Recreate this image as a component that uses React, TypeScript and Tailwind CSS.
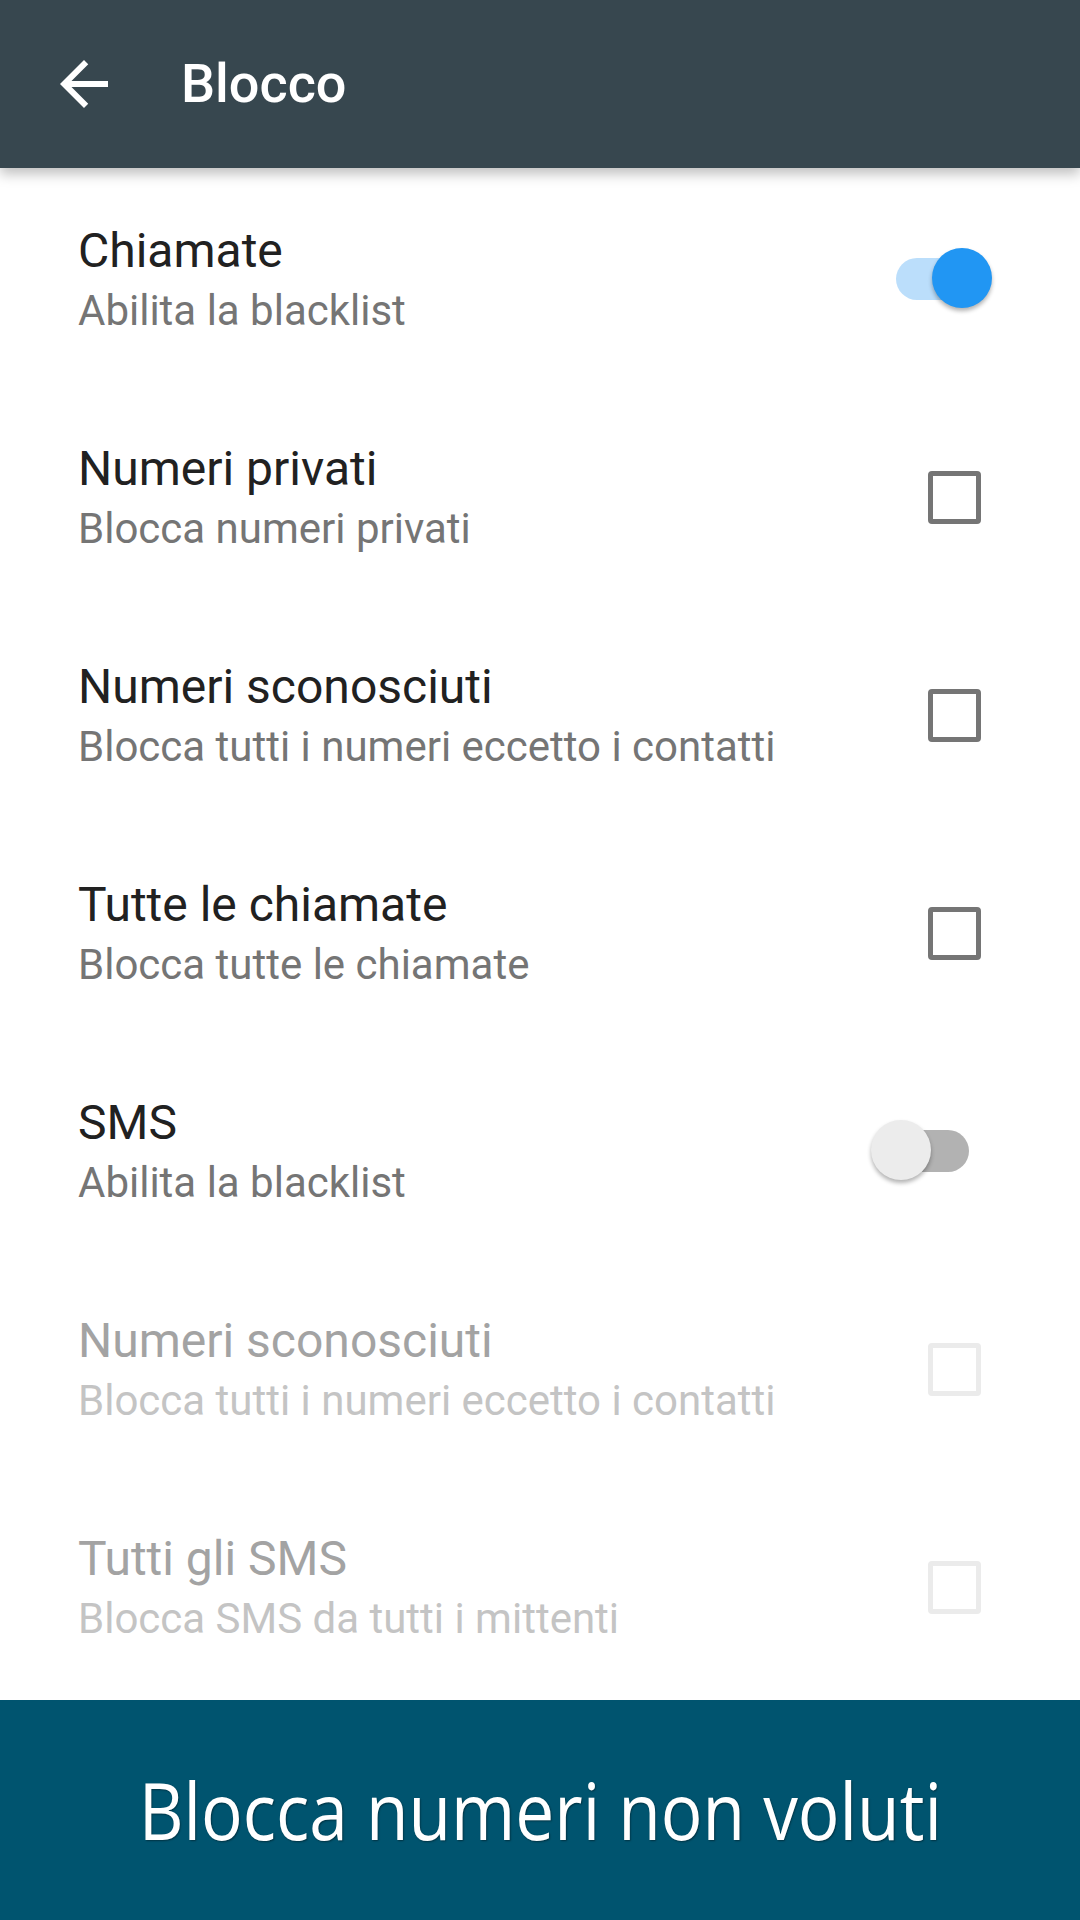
import { useState } from 'react';

type Control = 'switch' | 'checkbox';

type Pref = {
  id: string;
  title: string;
  summary: string;
  control: Control;
  checked: boolean;
  disabled?: boolean;
};

const initialPrefs: Pref[] = [
  { id: 'calls', title: 'Chiamate', summary: 'Abilita la blacklist', control: 'switch', checked: true },
  { id: 'private', title: 'Numeri privati', summary: 'Blocca numeri privati', control: 'checkbox', checked: false },
  { id: 'unknown', title: 'Numeri sconosciuti', summary: 'Blocca tutti i numeri eccetto i contatti', control: 'checkbox', checked: false },
  { id: 'all-calls', title: 'Tutte le chiamate', summary: 'Blocca tutte le chiamate', control: 'checkbox', checked: false },
  { id: 'sms', title: 'SMS', summary: 'Abilita la blacklist', control: 'switch', checked: false },
  { id: 'sms-unknown', title: 'Numeri sconosciuti', summary: 'Blocca tutti i numeri eccetto i contatti', control: 'checkbox', checked: false, disabled: true },
  { id: 'sms-all', title: 'Tutti gli SMS', summary: 'Blocca SMS da tutti i mittenti', control: 'checkbox', checked: false, disabled: true },
];

function Switch({ on }: { on: boolean }) {
  return (
    <div className="relative w-[121px] h-[62px] mr-[88px]">
      <div className={`absolute left-[25px] top-[10px] w-[73px] h-[42px] rounded-full ${on ? 'bg-[#BBDEFB]' : 'bg-[#B2B2B2]'}`} />
      <div
        className={`absolute top-0 w-[60px] h-[60px] rounded-full shadow-[0_3px_4px_rgba(0,0,0,0.3)] ${
          on ? 'left-[61px] bg-[#2196F3]' : 'left-0 bg-[#ECECEC]'
        }`}
      />
    </div>
  );
}

function Checkbox({ checked, disabled }: { checked: boolean; disabled?: boolean }) {
  return (
    <div
      className={`w-[53px] h-[53px] mr-[99px] rounded-[4px] border-[5px] ${
        disabled ? 'border-[#EBEBEB]' : 'border-[#757575]'
      } ${checked ? 'bg-[#757575]' : ''}`}
    />
  );
}

export default function App() {
  const [prefs, setPrefs] = useState(initialPrefs);

  const toggle = (id: string) =>
    setPrefs(prev => prev.map(p => (p.id === id && !p.disabled ? { ...p, checked: !p.checked } : p)));

  return (
    <div className="h-[1920px] w-[1080px] flex flex-col bg-white font-['Roboto',sans-serif] overflow-hidden">
      {/* Toolbar */}
      <div className="relative z-10 h-[168px] shrink-0 bg-[#37474F] flex items-center shadow-[0_6px_12px_rgba(0,0,0,0.25)]">
        <svg viewBox="0 0 24 24" className="ml-[48px] w-[72px] h-[72px]" fill="#ffffff">
          <path d="M20 11H7.83l5.59-5.59L12 4l-8 8 8 8 1.41-1.41L7.83 13H20v-2z" />
        </svg>
        <span className="ml-[61px] text-[54px] leading-none font-medium text-white">Blocco</span>
      </div>

      {/* Preferences */}
      <div className="flex-1 pt-[2px]">
        {prefs.map(p => (
          <div
            key={p.id}
            onClick={() => toggle(p.id)}
            className="h-[218px] flex items-center justify-between pl-[78px]"
          >
            <div className="flex flex-col">
              <span className={`text-[48px] leading-[56px] ${p.disabled ? 'text-[#A3A3A3]' : 'text-[#212121]'}`}>
                {p.title}
              </span>
              <span className={`mt-[7px] text-[42px] leading-[49px] ${p.disabled ? 'text-[#C4C4C4]' : 'text-[#757575]'}`}>
                {p.summary}
              </span>
            </div>
            {p.control === 'switch' ? (
              <Switch on={p.checked} />
            ) : (
              <Checkbox checked={p.checked} disabled={p.disabled} />
            )}
          </div>
        ))}
      </div>

      {/* Banner */}
      <div className="h-[220px] shrink-0 bg-[#00546F] flex items-center justify-center">
        <span className="font-['Open_Sans',sans-serif] text-[78px] leading-none text-white scale-x-[0.89] whitespace-nowrap [text-shadow:1px_1px_2px_rgba(0,0,0,0.4)]">
          Blocca numeri non voluti
        </span>
      </div>
    </div>
  );
}
